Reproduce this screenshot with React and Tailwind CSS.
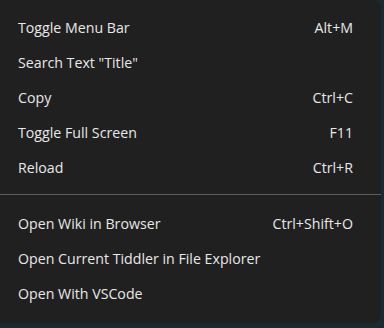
export default function App() {
  const group1 = [
    ["Toggle Menu Bar", "Alt+M"],
    ['Search Text "Title"', ""],
    ["Copy", "Ctrl+C"],
    ["Toggle Full Screen", "F11"],
    ["Reload", "Ctrl+R"],
  ];
  const group2 = [
    ["Open Wiki in Browser", "Ctrl+Shift+O"],
    ["Open Current Tiddler in File Explorer", ""],
    ["Open With VSCode", ""],
  ];
  const Row = ({ label, sc }) => (
    <div className="flex h-[35px] items-center justify-between pl-[18px] pr-[28px]">
      <span>{label}</span>
      <span>{sc}</span>
    </div>
  );
  return (
    <div className="h-[328px] w-[384px] bg-[#1a2a31]">
      <div
        className="flex h-[323px] w-[381px] flex-col rounded-r-[8px] bg-[#202020] pt-[10px] text-[14.2px] text-[#e8e8e8]"
        style={{ fontFamily: '"Open Sans", sans-serif' }}
      >
        {group1.map(([l, s]) => (
          <Row key={l} label={l} sc={s} />
        ))}
        <div className="mt-[9px] mb-[11px] h-px bg-[#5c5c5c]" />
        {group2.map(([l, s]) => (
          <Row key={l} label={l} sc={s} />
        ))}
      </div>
    </div>
  );
}
